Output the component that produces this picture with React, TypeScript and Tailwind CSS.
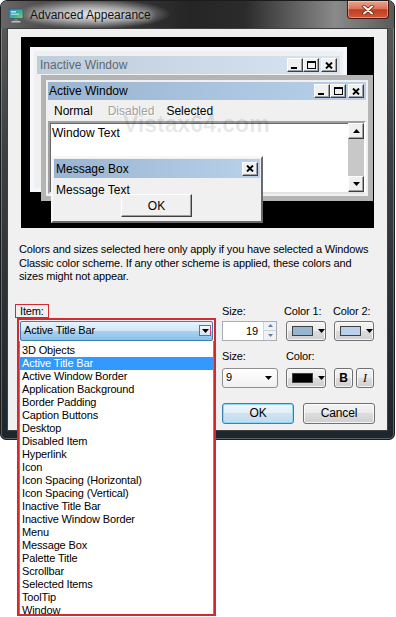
import type { ReactNode } from 'react'

const items = [
  '3D Objects',
  'Active Title Bar',
  'Active Window Border',
  'Application Background',
  'Border Padding',
  'Caption Buttons',
  'Desktop',
  'Disabled Item',
  'Hyperlink',
  'Icon',
  'Icon Spacing (Horizontal)',
  'Icon Spacing (Vertical)',
  'Inactive Title Bar',
  'Inactive Window Border',
  'Menu',
  'Message Box',
  'Palette Title',
  'Scrollbar',
  'Selected Items',
  'ToolTip',
  'Window',
]

const grayBtn =
  'border border-[#707070] rounded-[3px] bg-[image:linear-gradient(to_bottom,#f3f3f3_0%,#ebebeb_50%,#dddddd_50%,#cfcfcf_100%)] shadow-[inset_0_0_0_1px_rgba(255,255,255,0.75)]'

const Tri = ({ up = false }: { up?: boolean }) => (
  <svg width="7" height="4" viewBox="0 0 7 4">
    <path d={up ? 'M0 4h7L3.5 0z' : 'M0 0h7L3.5 4z'} fill="black" />
  </svg>
)

const MonitorIcon = () => (
  <svg width="16" height="16" viewBox="0 0 16 16">
    <defs>
      <linearGradient id="scr" x1="0" y1="0" x2="1" y2="1">
        <stop offset="0" stopColor="#3f8fd8" />
        <stop offset="0.55" stopColor="#2fb3a0" />
        <stop offset="1" stopColor="#8fd14f" />
      </linearGradient>
    </defs>
    <rect x="0.5" y="1.5" width="15" height="10.5" rx="1" fill="#4d5a66" />
    <rect x="1.5" y="2.5" width="13" height="8.5" fill="url(#scr)" />
    <rect x="3" y="4" width="5" height="1.5" fill="#ffffff" opacity="0.7" />
    <rect x="3" y="6.5" width="8" height="1.5" fill="#ffffff" opacity="0.5" />
    <rect x="6" y="12" width="4" height="2" fill="#6f7c88" />
    <rect x="3.5" y="14" width="9" height="1.5" fill="#b5c0c9" />
  </svg>
)

// classic 3D caption button used in the preview windows
const CapBtn = ({ kind }: { kind: 'min' | 'max' | 'close' }) => (
  <div className="w-[16px] h-[14px] bg-[#f0f0f0] border border-t-white border-l-white border-r-[#404040] border-b-[#404040] shadow-[inset_-1px_-1px_0_#a0a0a0] flex items-center justify-center">
    {kind === 'min' && <div className="w-[6px] h-[2px] bg-black mt-[6px] -ml-[2px]" />}
    {kind === 'max' && <div className="w-[9px] h-[8px] border border-black border-t-2" />}
    {kind === 'close' && (
      <svg width="8" height="7" viewBox="0 0 8 7">
        <path d="M1 0.5L7 6.5M7 0.5L1 6.5" stroke="black" strokeWidth="1.9" />
      </svg>
    )}
  </div>
)

const TitleBar = ({ title, active, children }: { title: string, active: boolean, children: ReactNode }) => (
  <div
    className={
      active
        ? 'h-[18px] flex items-center pl-[1px] pr-[2px] text-[12px] text-black bg-[image:linear-gradient(to_right,#99b4d1,#b9d1ea)]'
        : 'h-[18px] flex items-center pl-[3px] pr-[3px] text-[12px] text-[#5d6870] bg-[image:linear-gradient(to_right,#bfcddb,#d7e4f2)]'
    }
  >
    <span>{title}</span>
    <div className="ml-auto flex items-center">{children}</div>
  </div>
)

const ScrollBtn = ({ up }: { up?: boolean }) => (
  <div className="h-[16px] bg-[#f0f0f0] border border-t-white border-l-white border-r-[#404040] border-b-[#404040] shadow-[inset_-1px_-1px_0_#a0a0a0] flex items-center justify-center">
    <Tri up={up} />
  </div>
)

const Preview = () => (
  <div className="ml-[13px] mt-[8px] w-[353px] h-[191px] bg-black relative overflow-hidden">
    {/* inactive window */}
    <div className="absolute left-[9px] top-[10px] w-[317px] h-[145px] border-[4px] border-[#f4f7fc] bg-[#f0f0f0] px-[3px] pt-[5px]">
      <TitleBar title="Inactive Window" active={false}>
        <CapBtn kind="min" />
        <CapBtn kind="max" />
        <div className="w-[2px]" />
        <CapBtn kind="close" />
      </TitleBar>
    </div>

    {/* active window */}
    <div className="absolute left-[20px] top-[38px] w-[332px] h-[126px] border-[5px] border-[#b4b4b4] bg-[#f0f0f0] p-[2px] flex flex-col">
      <TitleBar title="Active Window" active>
        <CapBtn kind="min" />
        <CapBtn kind="max" />
        <div className="w-[2px]" />
        <CapBtn kind="close" />
      </TitleBar>
      <div className="h-[21px] flex items-center text-[12px]">
        <span className="ml-[6px]">Normal</span>
        <span className="ml-[15px] text-[#a0a0a0] [text-shadow:1px_1px_0_#ffffff]">Disabled</span>
        <span className="ml-[12px]">Selected</span>
      </div>
      <div className="flex-1 flex bg-white border-2 border-t-[#a0a0a0] border-l-[#a0a0a0] border-r-white border-b-[#e3e3e3] shadow-[inset_1px_1px_0_#696969]">
        <div className="flex-1 pl-[2px] pt-[3px] text-[12px] leading-[14px]">Window Text</div>
        <div className="w-[16px] flex flex-col">
          <ScrollBtn up />
          <div className="flex-1 bg-[#c8c8c8]" />
          <ScrollBtn />
        </div>
      </div>
    </div>

    {/* watermark */}
    <div className="absolute left-[102px] top-[75px] text-[23px] font-bold text-black/10 leading-[24px] pointer-events-none">
      Vistax64.com
    </div>

    {/* message box */}
    <div className="absolute left-[30px] top-[119px] w-[212px] h-[67px] bg-[#f0f0f0] border-2 border-t-[#f8f8f8] border-l-[#f8f8f8] border-r-[#696969] border-b-[#696969] p-[1px] flex flex-col">
      <div className="h-[19px] flex items-center pl-[2px] pr-[2px] text-[12px] bg-[image:linear-gradient(to_right,#99b4d1,#b9d1ea)]">
        <span>Message Box</span>
        <div className="ml-auto">
          <CapBtn kind="close" />
        </div>
      </div>
      <div className="mt-[6px] pl-[2px] text-[12px] leading-[13px]">Message Text</div>
      <div className="-mt-[3px] ml-[67px] w-[71px] h-[23px] bg-[#f0f0f0] border border-t-white border-l-white border-r-[#404040] border-b-[#404040] shadow-[inset_-1px_-1px_0_#a0a0a0] flex items-center justify-center text-[12px]">
        OK
      </div>
    </div>
  </div>
)

const ColorBtn = ({ swatch }: { swatch: string }) => (
  <div className={`w-[40px] h-[20px] flex items-center pl-[5px] gap-[5px] ${grayBtn}`}>
    <div className="w-[21px] h-[10px] border border-[#404040]" style={{ background: swatch }} />
    <Tri />
  </div>
)

export default function App() {
  return (
    <div className="w-[396px] h-[617px] bg-white relative overflow-hidden font-['Liberation_Sans',Arial,sans-serif] text-black">
      <div className="w-[395px] h-[440px] rounded-t-[7px] rounded-b-[6px] border border-[#1c1c1c] bg-[image:linear-gradient(to_bottom,#5c5c5c,#3a3f42_35%,#1d262c)] shadow-[inset_0_0_0_1px_rgba(255,255,255,0.28)] flex flex-col">

        {/* Title bar */}
        <div className="h-[27px] flex items-center pl-[7px] rounded-t-[6px] bg-[image:radial-gradient(ellipse_78px_15px_at_92px_13px,rgba(232,232,232,0.97),rgba(200,200,200,0.65)_55%,rgba(0,0,0,0)),linear-gradient(to_right,#686868,#4e4e4e_10%,#252525_48%,#2b2b2b_62%,#8a8a8a_85%,#5a5a5a)]">
          <MonitorIcon />
          <span className="ml-[6px] text-[12px] text-[#111] [text-shadow:0_0_6px_#ffffff]">Advanced Appearance</span>
          <div className="ml-auto self-start mr-[5px] w-[42px] h-[18px] rounded-b-[4px] border border-t-0 border-[#4a1a10] bg-[image:linear-gradient(to_bottom,#eba48e_0%,#d97457_45%,#c23b1f_52%,#cf5a3a_100%)] shadow-[inset_0_0_0_1px_rgba(255,255,255,0.35)] flex items-center justify-center">
            <svg width="12" height="10" viewBox="0 0 12 10">
              <path d="M2 1.5L10 8.5M10 1.5L2 8.5" stroke="#5a1d10" strokeWidth="3.4" strokeLinecap="round" />
              <path d="M2 1.5L10 8.5M10 1.5L2 8.5" stroke="#ffffff" strokeWidth="2" strokeLinecap="round" />
            </svg>
          </div>
        </div>

        {/* Client area */}
        <div className="mx-[6px] h-[403px] border border-[#3f3f3f] bg-[#f0f0f0] flex flex-col">
          <Preview />

          <div className="mt-[15px] ml-[11px] text-[11px] leading-[13.5px] tracking-[-0.15px]">
            <div>Colors and sizes selected here only apply if you have selected a Windows</div>
            <div>Classic color scheme. If any other scheme is applied, these colors and</div>
            <div>sizes might not appear.</div>
          </div>

          <div className="mt-[20px] flex text-[11px] tracking-[-0.15px]">
            {/* Item column */}
            <div className="ml-[7px] w-[201px] flex flex-col items-start">
              <span className="border border-[#d42a2f] px-[4px] h-[14px] leading-[12px]">Item:</span>
              <div className="relative mt-[3px] h-[20px] w-full">
                <div className="absolute left-[2px] -top-[3px] w-[199px] h-[298px] border-2 border-[#d42a2f] z-10 flex flex-col">
                  <div className="mx-[1px] mt-[1px] h-[20px] rounded-[2px] border border-[#3c7fb1] bg-[image:linear-gradient(to_bottom,#e6f3fc_0%,#cfe7f9_48%,#a9d2f1_52%,#8cc0e8_100%)] flex items-center pl-[3px] pr-[1px]">
                    <span>Active Title Bar</span>
                    <div className="ml-auto w-[12px] h-[11px] border border-[#c0467a] bg-[image:linear-gradient(to_bottom,#f4f8fc,#d6e6f4)] flex items-center justify-center">
                      <Tri />
                    </div>
                  </div>
                  <div className="flex-1 overflow-hidden bg-white border-l border-r border-[#828790] pt-[3px]">
                    {items.map(item => (
                      <div
                        key={item}
                        className={
                          item === 'Active Title Bar'
                            ? 'h-[13px] leading-[13px] pl-[2px] bg-[#3399ff] text-white whitespace-nowrap'
                            : 'h-[13px] leading-[13px] pl-[2px] whitespace-nowrap'
                        }
                      >
                        {item}
                      </div>
                    ))}
                  </div>
                </div>
              </div>
            </div>

            {/* Right controls */}
            <div className="ml-[6px] flex flex-col">
              <div className="flex h-[14px] leading-[14px]">
                <span className="w-[64px]">Size:</span>
                <span className="w-[48px] -ml-[2px] pl-0">Color 1:</span>
                <span className="ml-[1px]">Color 2:</span>
              </div>
              <div className="mt-[3px] flex h-[20px]">
                <div className="w-[55px] h-[20px] border border-[#abadb3] bg-white flex">
                  <span className="flex-1 text-right pr-[5px] leading-[18px]">19</span>
                  <div className="w-[13px] flex flex-col border-l border-[#d5d5d5]">
                    <div className="flex-1 flex items-center justify-center bg-[#eef2f7] border-b border-[#c9d1db]">
                      <svg width="5" height="3" viewBox="0 0 5 3"><path d="M0 3h5L2.5 0z" fill="#6a7d96" /></svg>
                    </div>
                    <div className="flex-1 flex items-center justify-center bg-[#eef2f7]">
                      <svg width="5" height="3" viewBox="0 0 5 3"><path d="M0 0h5L2.5 3z" fill="#6a7d96" /></svg>
                    </div>
                  </div>
                </div>
                <div className="ml-[9px]">
                  <ColorBtn swatch="#99b4d1" />
                </div>
                <div className="ml-[8px]">
                  <ColorBtn swatch="#b9d1ea" />
                </div>
              </div>

              <div className="mt-[8px] flex h-[14px] leading-[14px]">
                <span className="w-[64px]">Size:</span>
                <span>Color:</span>
              </div>
              <div className="mt-[5px] flex h-[20px]">
                <div className="w-[56px] h-[20px] rounded-[3px] border border-[#8e8f8f] bg-[image:linear-gradient(to_bottom,#ffffff,#f0f0f0)] flex items-center pl-[3px] pr-[5px]">
                  <span>9</span>
                  <div className="ml-auto"><Tri /></div>
                </div>
                <div className="ml-[8px]">
                  <ColorBtn swatch="#000000" />
                </div>
                <div className={`ml-[8px] w-[19px] h-[20px] flex items-center justify-center font-bold text-[12px] ${grayBtn}`}>B</div>
                <div className={`ml-[3px] w-[18px] h-[20px] flex items-center justify-center italic text-[12px] font-['Liberation_Serif',serif] ${grayBtn}`}>I</div>
              </div>

              <div className="mt-[15px] flex">
                <div className="w-[72px] h-[21px] rounded-[3px] border border-[#3c7fb1] bg-[image:linear-gradient(to_bottom,#eef6fc_0%,#e2eef8_50%,#cfe3f2_50%,#c2dbee_100%)] shadow-[inset_0_0_0_1px_#8fd6f7] flex items-center justify-center text-[12px]">
                  OK
                </div>
                <div className={`ml-[9px] w-[72px] h-[21px] flex items-center justify-center text-[12px] ${grayBtn}`}>
                  Cancel
                </div>
              </div>
            </div>
          </div>
        </div>
      </div>
    </div>
  )
}
